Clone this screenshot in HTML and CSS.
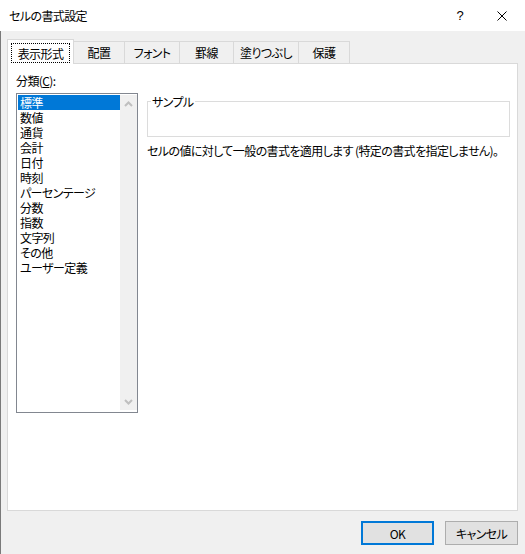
FILE: index.html
```html
<!DOCTYPE html>
<html lang="ja">
<head>
<meta charset="utf-8">
<title>セルの書式設定</title>
<link rel="stylesheet" href="styles.css">
</head>
<body>
<div class="window">
  <div class="titlebar">
    <div class="title">セルの書式設定</div>
    <div class="caption-btn help">?</div>
    <div class="caption-btn close">
      <svg width="10" height="10" viewBox="0 0 10 10"><path d="M0.5 0.5L9.5 9.5M9.5 0.5L0.5 9.5" stroke="#000" stroke-width="1" fill="none"/></svg>
    </div>
  </div>
  <div class="client">
    <div class="tabs">
      <div class="tab active"><span class="focus">表示形式</span></div>
      <div class="tab t-align">配置</div>
      <div class="tab t-font">フォント</div>
      <div class="tab t-border">罫線</div>
      <div class="tab t-fill">塗りつぶし</div>
      <div class="tab t-protect">保護</div>
    </div>
    <div class="panel">
      <div class="left">
        <div class="label">分類(<u>C</u>):</div>
        <div class="listbox">
          <ul class="items">
            <li class="selected">標準</li>
            <li>数値</li>
            <li>通貨</li>
            <li>会計</li>
            <li>日付</li>
            <li>時刻</li>
            <li>パーセンテージ</li>
            <li>分数</li>
            <li>指数</li>
            <li>文字列</li>
            <li>その他</li>
            <li>ユーザー定義</li>
          </ul>
          <div class="scrollbar">
            <div class="sb-btn">
              <svg width="9" height="6" viewBox="0 0 9 6"><path d="M1 5L4.5 1.5L8 5" stroke="#bfbfbf" stroke-width="2" fill="none"/></svg>
            </div>
            <div class="sb-track"></div>
            <div class="sb-btn">
              <svg width="9" height="6" viewBox="0 0 9 6"><path d="M1 1L4.5 4.5L8 1" stroke="#bfbfbf" stroke-width="2" fill="none"/></svg>
            </div>
          </div>
        </div>
      </div>
      <div class="right">
        <div class="groupbox">
          <span class="group-label">サンプル</span>
        </div>
        <p class="desc">セルの値に対して一般の書式を適用します (特定の書式を指定しません)。</p>
      </div>
    </div>
    <div class="footer">
      <button class="btn default">OK</button>
      <button class="btn">キャンセル</button>
    </div>
  </div>
</div>
</body>
</html>
```

FILE: styles.css
```css
* { box-sizing: border-box; }

html, body {
  margin: 0;
  padding: 0;
}

body {
  width: 525px;
  height: 554px;
  overflow: hidden;
  background: #f0f0f0;
  font-family: "Noto Sans CJK JP", "Noto Sans", sans-serif;
  font-size: 12px;
  color: #000;
  font-feature-settings: "palt";
  letter-spacing: -0.6px;
}

.window {
  width: 525px;
  height: 554px;
  display: flex;
  flex-direction: column;
}

.titlebar {
  height: 31px;
  background: #fff;
  display: flex;
  align-items: center;
  padding-left: 9px;
}

.title {
  flex: 1;
  line-height: 15px;
}

.caption-btn {
  height: 31px;
  display: flex;
  align-items: center;
  justify-content: center;
}

.help {
  width: 40px;
  font-family: "Liberation Sans", sans-serif;
  font-size: 13px;
  letter-spacing: 0;
  padding-left: 2px;
}

.close {
  width: 46px;
}

.client {
  flex: 1;
  border-left: 1px solid #7a7a7a;
  padding: 8px 7px 9px 6px;
  display: flex;
  flex-direction: column;
}

.tabs {
  display: flex;
  align-items: flex-end;
  height: 25px;
  margin-bottom: -1px;
  position: relative;
  z-index: 1;
}

.tab {
  height: 22px;
  margin-bottom: 1px;
  margin-left: -1px;
  border: 1px solid #d9d9d9;
  border-bottom: none;
  background: #f0f0f0;
  display: flex;
  align-items: center;
  justify-content: center;
  line-height: 15px;
}

.tab.active {
  height: 25px;
  margin-bottom: 0;
  margin-left: 0;
  width: 67px;
  background: #fff;
  align-items: flex-start;
  z-index: 2;
}

.focus {
  margin: 3px 3px 0 3px;
  height: 20px;
  flex: 1;
  border: 1px dotted #000;
  display: flex;
  align-items: center;
  justify-content: center;
}

.t-align { width: 52px; }
.t-font { width: 56px; }
.t-border { width: 55px; }
.t-fill { width: 66px; }
.t-protect { width: 52px; }

.panel {
  height: 448px;
  background: #fff;
  border: 1px solid #d9d9d9;
  display: flex;
  padding: 9px 7px 0 8px;
  gap: 9px;
}

.left {
  width: 122px;
  flex-shrink: 0;
  display: flex;
  flex-direction: column;
}

.label {
  line-height: 15px;
  margin-bottom: 5px;
}

.listbox {
  height: 320px;
  border: 1px solid #828790;
  padding: 1px 0 1px 1px;
  display: flex;
}

.items {
  list-style: none;
  margin: 0;
  padding: 0;
  flex: 1;
}

.items li {
  height: 15px;
  line-height: 15px;
  padding-left: 2px;
  white-space: nowrap;
}

.items li.selected {
  background: #0078d7;
  color: #fff;
}

.scrollbar {
  width: 17px;
  flex-shrink: 0;
  margin-bottom: 1px;
  background: #f0f0f0;
  display: flex;
  flex-direction: column;
}

.sb-btn {
  height: 17px;
  display: flex;
  align-items: center;
  justify-content: center;
}

.sb-track {
  flex: 1;
}

.right {
  flex: 1;
  min-width: 0;
  display: flex;
  flex-direction: column;
}

.groupbox {
  position: relative;
  margin-top: 28px;
  height: 36px;
  border: 1px solid #dcdcdc;
}

.group-label {
  position: absolute;
  top: -8px;
  left: 3px;
  padding: 0 1px;
  background: #fff;
  line-height: 15px;
}

.desc {
  margin: 6px 0 0 0;
  line-height: 15px;
  white-space: nowrap;
}

.footer {
  display: flex;
  justify-content: flex-end;
  gap: 11px;
  margin-top: 10px;
}

.btn {
  width: 73px;
  height: 24px;
  background: #e1e1e1;
  border: 1px solid #adadad;
  font-family: "Noto Sans CJK JP", "Noto Sans", sans-serif;
  font-size: 12px;
  font-feature-settings: "palt";
  letter-spacing: -0.6px;
  color: #000;
  padding: 0;
  line-height: 15px;
}

.btn.default {
  border: 2px solid #0078d7;
}
```
